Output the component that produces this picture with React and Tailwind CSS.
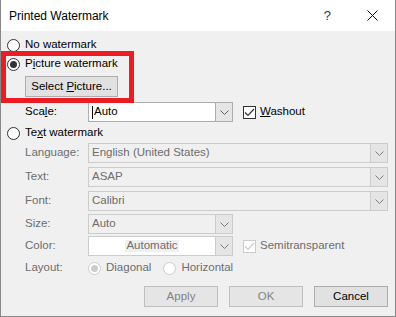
import React from 'react';

const font = { fontFamily: '"Liberation Sans", Arial, sans-serif' };

const Chevron = ({ color = '#606060' }) => (
  <svg width="9" height="5" viewBox="0 0 9 5">
    <polyline points="0.5,0.5 4.5,4.5 8.5,0.5" fill="none" stroke={color} strokeWidth="1" />
  </svg>
);

const Radio = ({ checked, disabled }) => (
  <span
    className={`w-[13px] h-[13px] rounded-full border flex items-center justify-center shrink-0 ${
      disabled ? 'border-[#cccccc] bg-white' : 'border-[#333333] bg-white'
    }`}
  >
    {checked && (
      <span className={`w-[7px] h-[7px] rounded-full ${disabled ? 'bg-[#cccccc]' : 'bg-[#333333]'}`} />
    )}
  </span>
);

const Check = ({ disabled }) => (
  <span
    className={`w-[13px] h-[13px] border flex items-center justify-center shrink-0 bg-white ${
      disabled ? 'border-[#cccccc]' : 'border-[#333333]'
    }`}
  >
    <svg width="11" height="9" viewBox="0 0 11 9">
      <polyline points="1,4.5 4,7.5 10,1" fill="none" stroke={disabled ? '#cccccc' : '#333333'} strokeWidth="1.2" />
    </svg>
  </span>
);

const Combo = ({ value, width, disabled, white, center, caret }) => (
  <div
    className={`h-[20px] flex border ${disabled ? 'border-[#cccccc]' : 'border-[#adadad]'} ${
      white ? 'bg-white' : 'bg-[#f0f0f0]'
    }`}
    style={{ width }}
  >
    <div
      className={`flex-1 flex items-center ${center ? 'justify-center' : 'pl-[3px]'} ${
        disabled ? 'text-[#6d6d6d]' : 'text-black'
      }`}
    >
      {caret && <span className="w-px h-[13px] bg-black mr-[1px]" />}
      <span className={center ? 'bg-[#f0f0f0] px-[1px]' : ''}>{value}</span>
    </div>
    <div
      className={`w-[17px] flex items-center justify-center border-l ${
        disabled ? 'border-[#cccccc] bg-[#e5e5e5]' : 'border-[#adadad] bg-[#e5e5e5]'
      }`}
    >
      <Chevron color={disabled ? '#7a7a7a' : '#606060'} />
    </div>
  </div>
);

const FieldRow = ({ label, children, mt }) => (
  <div className={`flex items-center pl-[24px] ${mt}`}>
    <span className="w-[63px] text-[#6d6d6d]">{label}</span>
    {children}
  </div>
);

const Button = ({ children, disabled }) => (
  <div
    className={`w-[74px] h-[21px] flex items-center justify-center border ${
      disabled ? 'border-[#bfbfbf] bg-[#e5e5e5] text-[#838383]' : 'border-[#adadad] bg-[#e1e1e1] text-black'
    }`}
  >
    {children}
  </div>
);

export default function App() {
  return (
    <div
      className="relative w-[396px] h-[317px] bg-[#f0f0f0] border-l border-r border-b border-[#888888] text-[11.5px] leading-none overflow-hidden"
      style={font}
    >
      <div className="h-[31px] bg-white flex items-center pl-[8px] pr-[17px] text-black">
        <span className="text-[12px]">Printed Watermark</span>
        <span className="ml-auto mr-[36px] text-[13px] text-[#333]">?</span>
        <svg width="11" height="11" viewBox="0 0 11 11">
          <path d="M0.5,0.5 L10.5,10.5 M10.5,0.5 L0.5,10.5" stroke="#111" strokeWidth="1" />
        </svg>
      </div>

      <div className="pt-[5px] text-black">
        <div className="h-[18px] flex items-center gap-[5px] pl-[6px]">
          <Radio />
          <span>No watermark</span>
        </div>
        <div className="h-[18px] mt-[1px] flex items-center gap-[5px] pl-[6px]">
          <Radio checked />
          <span>
            P<u>i</u>cture watermark
          </span>
        </div>
        <div className="mt-[3px] pl-[24px]">
          <div className="w-[93px] h-[21px] flex items-center justify-center border border-[#adadad] bg-[#e1e1e1]">
            <span>
              Select <u>P</u>icture...
            </span>
          </div>
        </div>
        <div className="flex items-center pl-[24px] mt-[5px]">
          <span className="w-[63px]">
            Sca<u>l</u>e:
          </span>
          <Combo value="Auto" width={145} white caret />
          <div className="ml-[10px] flex items-center gap-[4px]">
            <Check />
            <span>
              <u>W</u>ashout
            </span>
          </div>
        </div>
        <div className="h-[18px] mt-[2px] flex items-center gap-[5px] pl-[6px]">
          <Radio />
          <span>
            Te<u>x</u>t watermark
          </span>
        </div>

        <FieldRow label="Language:" mt="mt-[1px]">
          <Combo value="English (United States)" width={300} disabled />
        </FieldRow>
        <FieldRow label="Text:" mt="mt-[4px]">
          <Combo value="ASAP" width={300} disabled />
        </FieldRow>
        <FieldRow label="Font:" mt="mt-[4px]">
          <Combo value="Calibri" width={300} disabled />
        </FieldRow>
        <FieldRow label="Size:" mt="mt-[3px]">
          <Combo value="Auto" width={145} disabled />
        </FieldRow>
        <FieldRow label="Color:" mt="mt-[2px]">
          <Combo value="Automatic" width={145} white center disabled />
          <div className="ml-[10px] flex items-center gap-[4px] text-[#6d6d6d]">
            <Check disabled />
            <span>Semitransparent</span>
          </div>
        </FieldRow>
        <div className="h-[18px] mt-[3px] flex items-center pl-[24px] text-[#6d6d6d]">
          <span className="w-[63px]">Layout:</span>
          <div className="flex items-center gap-[5px]">
            <Radio checked disabled />
            <span>Diagonal</span>
          </div>
          <div className="flex items-center gap-[5px] ml-[12px]">
            <Radio disabled />
            <span>Horizontal</span>
          </div>
        </div>

        <div className="mt-[9px] flex justify-end gap-[11px] pr-[7px]">
          <Button disabled>Apply</Button>
          <Button disabled>OK</Button>
          <Button>Cancel</Button>
        </div>
      </div>

      <div className="absolute left-0 top-[51px] w-[133px] h-[52px] border-[5px] border-[#ec1c24]" />
    </div>
  );
}
